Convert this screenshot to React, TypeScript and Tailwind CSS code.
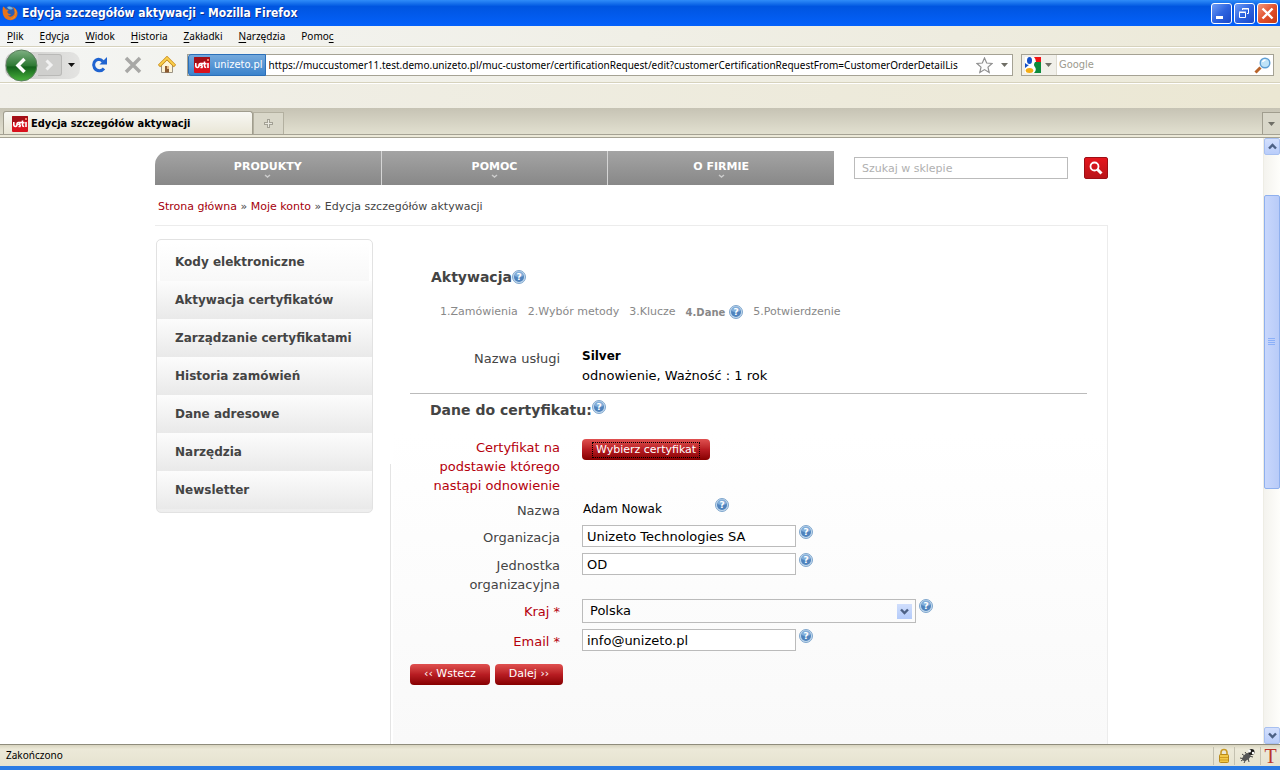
import { FC, ReactNode, useState } from "react";

const menuItems = [
  { before: "", key: "P", after: "lik" },
  { before: "", key: "E", after: "dycja" },
  { before: "", key: "W", after: "idok" },
  { before: "", key: "H", after: "istoria" },
  { before: "", key: "Z", after: "akładki" },
  { before: "", key: "N", after: "arzędzia" },
  { before: "Pomo", key: "c", after: "" },
];

const navItems = ["PRODUKTY", "POMOC", "O FIRMIE"];

const sideItems = [
  "Kody elektroniczne",
  "Aktywacja certyfikatów",
  "Zarządzanie certyfikatami",
  "Historia zamówień",
  "Dane adresowe",
  "Narzędzia",
  "Newsletter",
];

const UnizetoIcon: FC = () => (
  <svg width="16" height="16" viewBox="0 0 16 16" className="shrink-0">
    <rect width="16" height="16" rx="1" fill="#d8121e" />
    <path d="M0 1q0-1 1-1h14q1 0 1 1v4Q8 4 0 8z" fill="#a30e17" />
    <path
      d="M1.800 6v2.500q0 2 1.600 2T5 8.500q0-2 1.500-2H8.500L7 8.300q1.800.5 1 2.200H6.500M10.500 4.500V9q0 1.500 1.700 1.500M9.500 6.800h3M14 6v5"
      fill="none"
      stroke="#fff"
      strokeWidth="1.600"
    />
    <rect x="13" y="2" width="2" height="2" fill="#ff7a66" />
  </svg>
);

const FirefoxIcon: FC = () => (
  <svg width="16" height="16" viewBox="0 0 16 16" className="shrink-0">
    <circle cx="8" cy="7.500" r="6.500" fill="#2d5fb4" />
    <path d="M5 2q3-1.500 6 1-1 2-3 1.500T5 2z" fill="#6fb5e8" />
    <path
      d="M1 1.500Q3 2.500 4 4.500q2 0 3 .5-2 .8-1.500 2.500 1 2 3.500 1.500-1 2-3.500 1.500 2.500 2 5 .5T12.500 7q0-3-2-5 4 1 5 5.500.3 4.500-3.500 6.800-4.500 2.200-8.500-.8Q-.5 10 1 1.500z"
      fill="#e8731a"
    />
    <path d="M13 3.500q2.500 4 0 7.500t-6.500 3.200q6 .3 7-4 .8-3.500-.5-6.700z" fill="#fbc33a" />
  </svg>
);

const GoogleIcon: FC = () => (
  <svg width="16" height="16" viewBox="0 0 16 16" className="shrink-0">
    <rect width="16" height="16" fill="#fff" />
    <path d="M9 0h7v5h-5Q11 2 9 0z" fill="#f01414" />
    <path d="M10 5h6v11H9q3-3 1-6-2-2 0-5z" fill="#0d8b3c" />
    <ellipse cx="4.500" cy="3.500" rx="2.500" ry="3.500" fill="#1450c8" />
    <path d="M0 6q2 2 4 2L0 11z" fill="#1450c8" />
    <ellipse cx="4.500" cy="13.500" rx="3.800" ry="2.500" fill="#f4ac14" />
  </svg>
);

const HelpIcon: FC = () => (
  <button type="button" aria-label="Pomoc" className="block h-[14px] w-[14px] shrink-0">
    <svg width="14" height="14" viewBox="0 0 14 14">
      <circle cx="7" cy="7" r="6.500" fill="#c3d9ee" stroke="#7fa6cc" />
      <circle cx="7" cy="7" r="5" fill="#4f83bd" />
      <path d="M2.500 6a4.500 4.500 0 0 1 9 0q-4.500 2-9 0z" fill="#82aeda" />
      <text
        x="7"
        y="10"
        textAnchor="middle"
        fontFamily="DejaVu Sans"
        fontSize="9"
        fontWeight="bold"
        fill="#fff"
      >
        ?
      </text>
    </svg>
  </button>
);

const DownArrow: FC = () => (
  <svg width="7" height="4" viewBox="0 0 7 4" className="shrink-0">
    <path d="M0 0h7L3.500 4z" fill="#6f6e66" />
  </svg>
);

const Chevron: FC<{ up?: boolean }> = ({ up }) => (
  <svg width="9" height="7" viewBox="0 0 9 7">
    <path
      d={up ? "M1 5.500l3.500-3.500 3.500 3.500" : "M1 1.500l3.500 3.500 3.500-3.500"}
      fill="none"
      stroke="#4d6185"
      strokeWidth="2.400"
    />
  </svg>
);

const TitleBar: FC = () => (
  <header className="flex h-[26px] shrink-0 items-center bg-gradient-to-b from-[#2f8cf8] via-[#0055e0] via-25% to-[#0461fb] pr-[2px] pl-[2px]">
    <FirefoxIcon />
    <h1 className="ml-1 flex-1 text-[12px] font-bold text-white [text-shadow:1px_1px_0_#0a2f8f]">
      Edycja szczegółów aktywacji - Mozilla Firefox
    </h1>
    <div className="flex gap-[2px]">
      <button
        type="button"
        aria-label="Minimalizuj"
        className="h-[21px] w-[21px] rounded-[3px] border border-white bg-gradient-to-br from-[#6f9cf5] via-[#2e64e0] to-[#1a48c8]"
      >
        <svg width="19" height="19" viewBox="0 0 19 19">
          <path d="M4 12h7v3H4z" fill="#fff" />
        </svg>
      </button>
      <button
        type="button"
        aria-label="Przywróć"
        className="h-[21px] w-[21px] rounded-[3px] border border-white bg-gradient-to-br from-[#6f9cf5] via-[#2e64e0] to-[#1a48c8]"
      >
        <svg width="19" height="19" viewBox="0 0 19 19" fill="none" stroke="#fff">
          <path d="M4.500 8.500h6v5h-6zM4 8h7M7.500 6V4.500h6v5H12M7 5h7" />
        </svg>
      </button>
      <button
        type="button"
        aria-label="Zamknij"
        className="h-[21px] w-[21px] rounded-[3px] border border-white bg-gradient-to-br from-[#f0957a] via-[#e2512c] to-[#c53a14]"
      >
        <svg width="19" height="19" viewBox="0 0 19 19">
          <path d="M4.500 4.500l10 10M14.500 4.500l-10 10" stroke="#fff" strokeWidth="2.400" />
        </svg>
      </button>
    </div>
  </header>
);

const MenuBar: FC = () => (
  <nav className="flex h-[21px] shrink-0 items-center gap-4 border-b border-[#d6d2bd] bg-gradient-to-r from-[#f4f5f4] to-[#ece9d8] pl-[7px] font-['Noto_Sans',sans-serif] text-[10px] text-black">
    {menuItems.map(({ before, key, after }) => (
      <button type="button" key={key}>
        {before}
        <span className="underline underline-offset-2">{key}</span>
        {after}
      </button>
    ))}
  </nav>
);

const Toolbar: FC = () => (
  <div className="flex h-[36px] shrink-0 items-center border-t border-b border-t-white border-b-[#d6d2bd] bg-gradient-to-r from-[#f4f5f3] to-[#ece9d8] pr-[6px] pl-[5px]">
    <div className="flex h-[27px] w-[75px] items-center rounded-[10px] bg-gradient-to-r from-[#c9c9c7] to-[#e4e4e2]">
      <button type="button" aria-label="Wstecz" className="shrink-0">
        <svg width="33" height="33" viewBox="0 0 33 33">
          <defs>
            <linearGradient id="back" x1="0" y1="0" x2="0" y2="1">
              <stop offset="0" stopColor="#7fb083" />
              <stop offset=".5" stopColor="#2f7a35" />
              <stop offset=".55" stopColor="#14621c" />
              <stop offset="1" stopColor="#48b23c" />
            </linearGradient>
          </defs>
          <circle cx="16.500" cy="16.500" r="15.500" fill="url(#back)" stroke="#5b7f5e" />
          <path d="M19.500 10l-6.500 6.500 6.500 6.500" fill="none" stroke="#fff" strokeWidth="3.500" />
        </svg>
      </button>
      <button
        type="button"
        aria-label="Dalej"
        className="flex h-[22px] w-[24px] items-center justify-center rounded-r-[3px] border border-l-0 border-[#b9b9b7] bg-[#cfcfcd]"
      >
        <svg width="9" height="12" viewBox="0 0 9 12">
          <path d="M1.500 1.500L6 6l-4.500 4.500" fill="none" stroke="#f2f2f2" strokeWidth="3" />
        </svg>
      </button>
      <button type="button" aria-label="Historia stron" className="ml-[6px]">
        <svg width="7" height="4" viewBox="0 0 7 4">
          <path d="M0 0h7L3.500 4z" fill="#111" />
        </svg>
      </button>
    </div>
    <button type="button" aria-label="Odśwież" className="ml-[10px]">
      <svg width="18" height="18" viewBox="0 0 18 18">
        <path
          d="M13 5.500Q11 3.200 8.500 3.200a5.800 5.800 0 1 0 5.500 9.300"
          fill="none"
          stroke="#1f63d0"
          strokeWidth="3"
        />
        <path d="M17 1v7.500H9.500z" fill="#1f63d0" />
      </svg>
    </button>
    <button type="button" aria-label="Zatrzymaj" className="ml-4">
      <svg width="18" height="18" viewBox="0 0 18 18">
        <path d="M2 2l14 14M16 2L2 16" stroke="#a8a8a6" strokeWidth="3.500" />
      </svg>
    </button>
    <button type="button" aria-label="Strona startowa" className="ml-4">
      <svg width="18" height="18" viewBox="0 0 18 18">
        <path d="M3.500 9v7.500h11V9L9 4z" fill="#fdf3d6" stroke="#9b9384" />
        <path d="M1 10L9 2l8 8" fill="none" stroke="#c98a14" strokeWidth="3.200" />
        <path d="M1.500 9.500L9 2l7.500 7.500" fill="none" stroke="#fbd04c" strokeWidth="1.800" />
        <path d="M7 10h4v6.500H7z" fill="#8c5a30" />
        <path d="M9 10h2v3H9z" fill="#e5b980" />
      </svg>
    </button>
    <div className="ml-[11px] flex h-[22px] flex-1 items-center border border-[#a5a294] bg-white">
      <span className="-my-px flex h-[22px] shrink-0 items-center gap-1 rounded-l-[3px] border border-[#2b6fb8] bg-gradient-to-b from-[#74a9dc] to-[#3a83cc] pr-[2px] pl-[5px] text-[11px] text-white">
        <UnizetoIcon />
        unizeto.pl
      </span>
      <input
        aria-label="Adres"
        className="min-w-0 flex-1 bg-transparent pl-[3px] font-['Noto_Sans',sans-serif] text-[10px] text-black outline-none"
        defaultValue="https://muccustomer11.test.demo.unizeto.pl/muc-customer/certificationRequest/edit?customerCertificationRequestFrom=CustomerOrderDetailLis"
      />
      <button type="button" aria-label="Dodaj zakładkę" className="ml-px">
        <svg width="17" height="17" viewBox="0 0 17 17">
          <path
            d="M8.500 1l2.200 5 5.300.5-4 3.600 1.200 5.400-4.700-2.900-4.700 2.900L5 10.100 1 6.500 6.300 6z"
            fill="#fbfbfb"
            stroke="#8f8f8f"
            strokeWidth="1.200"
          />
        </svg>
      </button>
      <button type="button" aria-label="Pokaż historię" className="mr-1 ml-2">
        <DownArrow />
      </button>
    </div>
    <form className="ml-2 flex h-[22px] w-[253px] items-center border border-[#a5a294] bg-white">
      <button
        type="button"
        aria-label="Wyszukiwarka"
        className="flex h-full items-center gap-1 border-r border-[#dedbd0] bg-[#f1f0ea] pr-1 pl-[3px]"
      >
        <GoogleIcon />
        <DownArrow />
      </button>
      <input
        aria-label="Google"
        placeholder="Google"
        className="min-w-0 flex-1 bg-transparent pl-[2px] text-[11px] outline-none placeholder:text-[#9c9a8e]"
      />
      <button type="button" aria-label="Szukaj" className="mr-[2px]">
        <svg width="17" height="17" viewBox="0 0 17 17">
          <path d="M1.500 15.500l5-5" stroke="#b8632a" strokeWidth="3" />
          <circle cx="11" cy="6" r="4.800" fill="#bfe3f8" stroke="#5f9fd4" strokeWidth="1.400" />
          <path d="M8.500 5q1-2 3-2" stroke="#fff" strokeWidth="1.500" fill="none" />
        </svg>
      </button>
    </form>
  </div>
);

const TabStrip: FC = () => (
  <div className="flex h-[27px] shrink-0 items-end justify-between border-b border-[#a5a294] bg-gradient-to-b from-[#c6c3b4] to-[#e2e0d0] pl-[3px]">
    <div className="flex items-end">
      <div className="flex h-[23px] w-[250px] items-center gap-[3px] rounded-t-[3px] border border-b-0 border-[#a09d8e] bg-gradient-to-b from-[#f8f8f4] to-[#e9e6d6] pt-[2px] pl-2 text-[11px] font-bold text-black">
        <UnizetoIcon />
        Edycja szczegółów aktywacji
      </div>
      <button
        type="button"
        aria-label="Nowa karta"
        className="flex h-[22px] w-[31px] items-center justify-center border border-b-0 border-[#b3b0a0] bg-[#d9d7c9]"
      >
        <svg width="9" height="9" viewBox="0 0 9 9">
          <path d="M4.500 0v9M0 4.500h9" stroke="#a3a195" strokeWidth="3" />
          <path d="M4.500 1v7M1 4.500h7" stroke="#e9e8e0" />
        </svg>
      </button>
    </div>
    <button
      type="button"
      aria-label="Lista kart"
      className="flex h-[22px] w-[18px] items-center justify-center border border-r-0 border-b-0 border-[#a09d8e] bg-[#d9d7c9]"
    >
      <DownArrow />
    </button>
  </div>
);

const ScrollBar: FC = () => (
  <div className="flex w-[17px] shrink-0 flex-col border-l border-[#eeede5] bg-gradient-to-r from-[#f4f3ee] to-[#fefefb]">
    <button
      type="button"
      aria-label="W górę"
      className="flex h-[17px] shrink-0 items-center justify-center rounded-[2px] border border-[#a8c0f0] bg-gradient-to-b from-[#d4e0fd] to-[#b9cdfa]"
    >
      <Chevron up />
    </button>
    <div className="flex-[40]" />
    <div className="flex flex-[293] items-center justify-center rounded-[2px] border border-[#8fb0ee] bg-gradient-to-r from-[#c8d7fc] to-[#b8cbf8]">
      <svg width="8" height="8" viewBox="0 0 8 8">
        <path d="M0 .5h7M0 2.500h7M0 4.500h7M0 6.500h7" stroke="#8cb0f8" />
      </svg>
    </div>
    <div className="flex-[239]" />
    <button
      type="button"
      aria-label="W dół"
      className="flex h-[17px] shrink-0 items-center justify-center rounded-[2px] border border-[#a8c0f0] bg-gradient-to-b from-[#d4e0fd] to-[#b9cdfa]"
    >
      <Chevron />
    </button>
  </div>
);

const StatusBar: FC = () => (
  <footer className="flex h-[22px] shrink-0 items-center border-t border-[#8f8c7c] bg-gradient-to-b from-[#d8d4bf] via-[#ece9d8] via-20% to-[#e6e3d0] pl-[6px] font-['Noto_Sans',sans-serif] text-[10px] text-black">
    <span className="flex-1">Zakończono</span>
    <div className="flex h-[18px] items-center border-l border-[#c4c1b0] px-[4px]">
      <svg width="12" height="16" viewBox="0 0 12 16">
        <path d="M3 7V4.500q0-3 3-3t3 3V7" fill="none" stroke="#c99a26" strokeWidth="1.600" />
        <rect x="1.500" y="6.500" width="9" height="8" rx="1" fill="#f2c846" stroke="#b8891a" />
        <path d="M2 9.500h8M2 12h8" stroke="#d09d24" />
      </svg>
    </div>
    <div className="flex h-[18px] items-center border-l border-[#c4c1b0] px-[4px]">
      <svg width="17" height="16" viewBox="0 0 17 16">
        <path d="M3 6l4 3M6 4l3 4M1 10l5 1M5 15l2-4M10 14l-1-4M14 9l-4-1M2 13l4-3" stroke="#444" />
        <ellipse cx="7.500" cy="9" rx="5" ry="3" transform="rotate(-40 7.500 9)" fill="#555" />
        <circle cx="12.500" cy="4" r="3" fill="#1a1a1a" />
        <circle cx="10.500" cy="3" r="1.500" fill="#fff" />
        <circle cx="14" cy="5" r="1.200" fill="#fff" />
      </svg>
    </div>
    <div className="flex h-[18px] w-[20px] items-center justify-center border-l border-[#c4c1b0] font-['Liberation_Serif',serif] text-[20px] text-[#b9332b]">
      T
    </div>
  </footer>
);

const RedButton: FC<{ children: ReactNode; focused?: boolean }> = ({ children, focused }) => (
  <button
    type="button"
    className="flex h-[21px] items-center rounded-[4px] bg-gradient-to-b from-[#e05050] via-[#b81c22] to-[#860000] px-[11px] text-[11px] text-white"
  >
    <span className={focused ? "px-[3px] leading-[14px] outline-1 outline-dotted outline-black" : "px-[3px]"}>
      {children}
    </span>
  </button>
);

const FormRow: FC<{
  label: string;
  id?: string;
  required?: boolean;
  className: string;
  children: ReactNode;
}> = ({ label, id, required, className, children }) => (
  <div className={"flex gap-[22px] pl-5 " + className}>
    <label
      htmlFor={id}
      className={
        "w-[130px] shrink-0 pt-[3px] text-right leading-[19px] " + (required ? "text-[#b5000c]" : "text-[#444]")
      }
    >
      {label}
    </label>
    <div className="flex items-start gap-[3px]">{children}</div>
  </div>
);

const ShopHeader: FC = () => (
  <div className="flex items-center">
    <nav className="flex h-[34px] flex-1 overflow-hidden rounded-tl-[14px] bg-gradient-to-b from-[#a4a4a4] to-[#888]">
      {navItems.map((item) => (
        <a
          key={item}
          href="#"
          className="flex flex-1 flex-col items-center border-r border-[#d5d5d5] pt-2 text-[11px] leading-[15px] font-bold text-white last:border-r-0"
        >
          {item}
          <svg width="7" height="5" viewBox="0 0 7 5">
            <path d="M1 1l2.500 2L6 1" fill="none" stroke="#ccc" strokeWidth="1.500" />
          </svg>
        </a>
      ))}
    </nav>
    <input
      aria-label="Szukaj w sklepie"
      placeholder="Szukaj w sklepie"
      className="ml-5 h-[22px] w-[214px] border border-[#bbb] bg-white px-[7px] text-[11px] outline-none placeholder:text-[#b0b0b0]"
    />
    <button
      type="button"
      aria-label="Szukaj"
      className="ml-4 flex h-[22px] w-[24px] items-center justify-center rounded-[2px] border border-[#9c0f16] bg-gradient-to-b from-[#e5161d] to-[#b91419]"
    >
      <svg width="14" height="14" viewBox="0 0 14 14" fill="none" stroke="#fff">
        <circle cx="5.500" cy="5.500" r="4" strokeWidth="1.800" />
        <path d="M8.500 8.500l4 4" strokeWidth="3" />
      </svg>
    </button>
  </div>
);

const SideMenu: FC = () => (
  <aside className="mt-[13px] mr-[17px] ml-px w-[217px] shrink-0 self-start rounded-[5px] border border-[#e2e2e2] bg-gradient-to-b from-white via-[#fdfdfd] to-[#eee] py-[3px]">
    <ul>
      {sideItems.map((item) => (
        <li
          key={item}
          className="h-[38px] bg-gradient-to-b from-[#fcfcfc] to-[#e9e9e9] first:mx-[3px] first:from-white first:to-[#f8f8f8] [&:first-child>a]:pl-[15px]"
        >
          <a href="#" className="block pl-[18px] text-[12px] leading-[38px] font-bold text-[#444]">
            {item}
          </a>
        </li>
      ))}
    </ul>
  </aside>
);

const ActivationForm: FC = () => {
  const [organization, setOrganization] = useState<string>("Unizeto Technologies SA");
  const [unit, setUnit] = useState<string>("OD");
  const [country, setCountry] = useState<string>("Polska");
  const [email, setEmail] = useState<string>("info@unizeto.pl");

  const inputClass = "h-[22px] w-[214px] border border-[#bbb] bg-white px-1 text-[13px] text-black outline-none";

  return (
    <main className="ml-[2px] flex-1 border-r border-[#ececec] bg-gradient-to-b from-white from-40% to-[#f9f9f9] pr-5 pl-[17px] text-[13px]">
      <h2 className="mt-[41px] flex items-center pl-[21px] text-[14px] leading-[20px] font-bold text-[#444]">
        Aktywacja
        <HelpIcon />
      </h2>
      <ol className="mt-[15px] flex h-[20px] items-center gap-[10px] pl-[30px] text-[11px] text-[#888]">
        <li>1.Zamówienia</li>
        <li>2.Wybór metody</li>
        <li>3.Klucze</li>
        <li className="flex items-center gap-1 text-[10px] font-bold">
          4.Dane
          <HelpIcon />
        </li>
        <li>5.Potwierdzenie</li>
      </ol>
      <div className="mt-6 border-b border-[#bbb]">
        <FormRow label="Nazwa usługi" className="h-[47px]">
          <p className="leading-[19px] text-black">
            <b className="text-[12px]">Silver</b>
            <br />
            odnowienie, Ważność : 1 rok
          </p>
        </FormRow>
      </div>
      <h2 className="flex h-[44px] items-start pt-[6px] pl-5 text-[14px] leading-[20px] font-bold text-[#444]">
        Dane do certyfikatu:
        <HelpIcon />
      </h2>
      <form>
        <FormRow label="Certyfikat na podstawie którego nastąpi odnowienie" required className="-mt-[3px] h-[63px]">
          <div className="pt-1">
            <RedButton focused>Wybierz certyfikat</RedButton>
          </div>
        </FormRow>
        <FormRow label="Nazwa" className="h-[27px]">
          <span className="w-[130px] pt-[2px] pl-px text-[12px] leading-[19px] text-black">Adam Nowak</span>
          <HelpIcon />
        </FormRow>
        <FormRow label="Organizacja" id="organization" className="h-[28px]">
          <input
            id="organization"
            className={inputClass}
            value={organization}
            onChange={(e) => setOrganization(e.target.value)}
          />
          <HelpIcon />
        </FormRow>
        <FormRow label="Jednostka organizacyjna" id="unit" className="h-[46px]">
          <input id="unit" className={inputClass} value={unit} onChange={(e) => setUnit(e.target.value)} />
          <HelpIcon />
        </FormRow>
        <FormRow label="Kraj *" id="country" required className="h-[30px]">
          <div className="relative">
            <select
              id="country"
              className="block h-[24px] w-[334px] appearance-none border border-[#bbb] bg-transparent px-[7px] text-[13px] text-black outline-none"
              value={country}
              onChange={(e) => setCountry(e.target.value)}
            >
              <option>Polska</option>
            </select>
            <span className="pointer-events-none absolute top-[5px] right-1 flex h-[15px] w-[15px] items-center justify-center bg-gradient-to-b from-[#d0defc] to-[#b4cbfa]">
              <Chevron />
            </span>
          </div>
          <HelpIcon />
        </FormRow>
        <FormRow label="Email *" id="email" required className="h-[35px]">
          <input id="email" className={inputClass} value={email} onChange={(e) => setEmail(e.target.value)} />
          <HelpIcon />
        </FormRow>
        <div className="flex gap-[5px]">
          <RedButton>‹‹ Wstecz</RedButton>
          <RedButton>Dalej ››</RedButton>
        </div>
      </form>
    </main>
  );
};

const App: FC = () => {
  return (
    <div className="flex h-screen flex-col overflow-hidden bg-white font-['DejaVu_Sans_Condensed','DejaVu_Sans',sans-serif]">
      <TitleBar />
      <MenuBar />
      <Toolbar />
      <div className="h-[25px] shrink-0 border-t border-white bg-gradient-to-r from-[#f1f0ea] to-[#ebe7d3]" />
      <TabStrip />
      <div className="h-[3px] shrink-0 border-b border-[#a5a294] bg-[#ece9d8]" />
      <div className="flex min-h-0 flex-1">
        <div className="flex flex-1 overflow-hidden font-['DejaVu_Sans',sans-serif]">
          <div className="mx-auto flex w-full max-w-[953px] flex-col pt-[13px]">
            <ShopHeader />
            <p className="h-[40px] pt-[13px] pl-[3px] text-[11px] leading-[18px] text-[#444]">
              <a href="#" className="text-[#a5000c]">
                Strona główna
              </a>{" "}
              »{" "}
              <a href="#" className="text-[#a5000c]">
                Moje konto
              </a>{" "}
              » Edycja szczegółów aktywacji
            </p>
            <div className="flex flex-1 border-t border-[#ececec]">
              <SideMenu />
              <div className="mt-[238px] w-px shrink-0 bg-[#e4e4e4]" />
              <ActivationForm />
            </div>
          </div>
        </div>
        <ScrollBar />
      </div>
      <StatusBar />
      <div className="h-1 shrink-0 bg-[#2a7be4]" />
    </div>
  );
};

export default App;
